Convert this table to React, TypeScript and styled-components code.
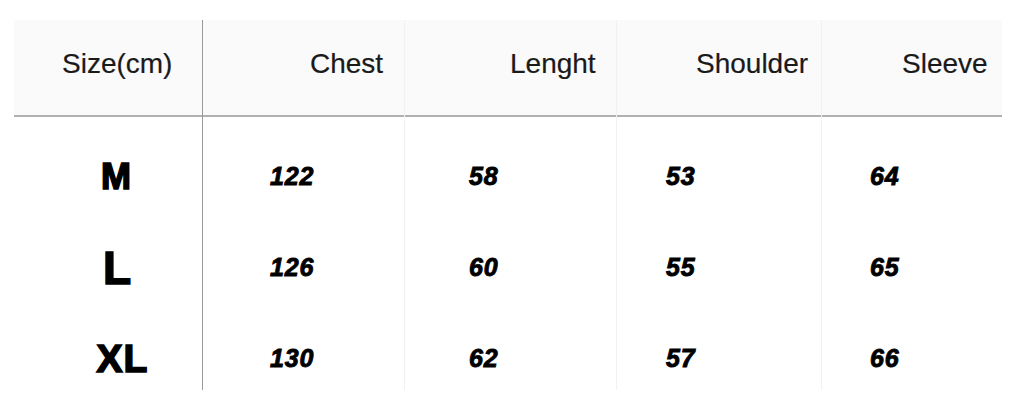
import React from 'react';
import styled, { createGlobalStyle } from 'styled-components';

interface ColumnDef {
  title: string;
  width: number;
  headPad: number;
  cellPad: number;
  values: string[];
}

const sizes = [
  { label: 'M', fontSize: 36, spacing: 2, pad: 18 },
  { label: 'L', fontSize: 46, spacing: 0, pad: 18 },
  { label: 'XL', fontSize: 39, spacing: 1, pad: 29 },
];

const columns: ColumnDef[] = [
  { title: 'Chest', width: 202, headPad: 107, cellPad: 67, values: ['122', '126', '130'] },
  { title: 'Lenght', width: 212, headPad: 105, cellPad: 64, values: ['58', '60', '62'] },
  { title: 'Shoulder', width: 205, headPad: 79, cellPad: 49, values: ['53', '55', '57'] },
  { title: 'Sleeve', width: 180, headPad: 80, cellPad: 48, values: ['64', '65', '66'] },
];

const App = () => {
  return (
    <>
      <GlobalStyle />
      <Page>
        <Table>
          <Column width={189} divider="#9a9a9a">
            <HeadCell pad={48}>Size(cm)</HeadCell>
            <Body>
              {sizes.map((s) => (
                <SizeCell key={s.label} fontSize={s.fontSize} spacing={s.spacing} pad={s.pad}>
                  {s.label}
                </SizeCell>
              ))}
            </Body>
          </Column>
          {columns.map((c, i) => (
            <Column key={c.title} width={c.width} divider={i < columns.length - 1 ? '#f1f1f1' : 'transparent'}>
              <HeadCell pad={c.headPad}>{c.title}</HeadCell>
              <Body>
                {c.values.map((v) => (
                  <ValueCell key={v} pad={c.cellPad}>
                    {v}
                  </ValueCell>
                ))}
              </Body>
            </Column>
          ))}
        </Table>
      </Page>
    </>
  );
};

export default App;

const GlobalStyle = createGlobalStyle`
  html, body {
    margin: 0;
    padding: 0;
    background: #ffffff;
  }
  body {
    font-family: "Liberation Sans", Arial, sans-serif;
    color: #1c1c1c;
  }
`;

const Page = styled('div')`
  width: 1018px;
  height: 419px;
  padding: 20px 0 0 14px;
  box-sizing: border-box;
  overflow: hidden;
`;

const Table = styled('div')`
  display: flex;
  align-items: flex-start;
`;

const Column = styled('div')<{ width: number; divider: string }>`
  width: ${(p) => p.width}px;
  height: 370px;
  box-sizing: border-box;
  border-right: 1px solid ${(p) => p.divider};
  display: flex;
  flex-direction: column;
  &:last-child {
    border-right: none;
  }
`;

const HeadCell = styled('div')<{ pad: number }>`
  height: 97px;
  flex-shrink: 0;
  box-sizing: border-box;
  background: #fafafa;
  border-bottom: 2px solid #b0b0b0;
  display: flex;
  align-items: center;
  padding: 0 0 7px ${(p) => p.pad}px;
  font-size: 28px;
  color: #1a1a1a;
  white-space: nowrap;
  -webkit-text-stroke: 0.2px #1a1a1a;
`;

const Body = styled('div')`
  display: grid;
  grid-template-rows: repeat(3, 91px);
  padding-top: 14px;
  height: 273px;
  box-sizing: border-box;
  overflow: visible;
`;

const SizeCell = styled('div')<{ fontSize: number; spacing: number; pad: number }>`
  display: flex;
  align-items: center;
  justify-content: center;
  padding-left: ${(p) => p.pad}px;
  font-size: ${(p) => p.fontSize}px;
  font-weight: 700;
  color: #000;
  letter-spacing: ${(p) => p.spacing}px;
  -webkit-text-stroke: 1.6px #000;
`;

const ValueCell = styled('div')<{ pad: number }>`
  display: flex;
  align-items: center;
  padding-left: ${(p) => p.pad}px;
  font-size: 25px;
  font-weight: 700;
  font-style: italic;
  color: #000;
  letter-spacing: 0.8px;
  -webkit-text-stroke: 0.9px #000;
`;
